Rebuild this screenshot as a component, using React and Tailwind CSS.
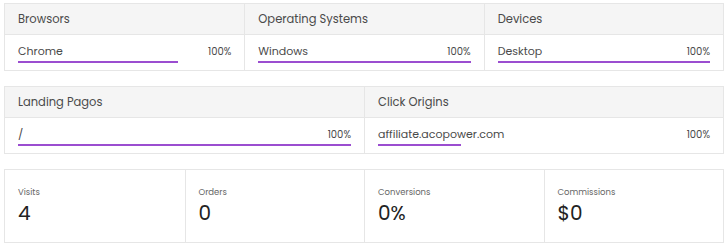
const font = { fontFamily: 'Poppins, Inter, "Open Sans", sans-serif' }

function Cell({ title, name, pct, bar, first }) {
  return (
    <div className={`flex flex-col ${first ? '' : 'border-l border-[#e6e6e6]'}`}>
      <div className="h-[31px] bg-[#f5f5f5] border-b border-[#e6e6e6] px-[13px] pt-[1px] flex items-center text-[11.5px] text-[#4a4a4a]">
        {title}
      </div>
      <div className="h-[35px] px-[13px] pt-[9px]">
        <div className="flex justify-between items-center text-[11px] leading-[15px] text-[#4a4a4a]">
          <span>{name}</span>
          <span className="text-[10px]">{pct}</span>
        </div>
        <div className="mt-[2px] h-[2px] bg-[#9b4dd0]" style={{ width: bar }} />
      </div>
    </div>
  )
}

function Stat({ label, value, first }) {
  return (
    <div className={`h-full px-[13px] pt-[15px] ${first ? '' : 'border-l border-[#e6e6e6]'}`}>
      <div className="text-[8.5px] leading-[14px] text-[#666]">{label}</div>
      <div className="mt-[1px] text-[20px] leading-[26px] text-[#222]">{value}</div>
    </div>
  )
}

export default function App() {
  return (
    <div className="w-[728px] h-[247px] bg-white px-[4px] pt-[3px] flex flex-col gap-[15px]" style={font}>
      <div className="grid grid-cols-3 border border-[#e6e6e6]">
        <Cell first title="Browsors" name="Chrome" pct="100%" bar="160px" />
        <Cell title="Operating Systems" name="Windows" pct="100%" bar="100%" />
        <Cell title="Devices" name="Desktop" pct="100%" bar="100%" />
      </div>
      <div className="grid grid-cols-2 border border-[#e6e6e6]">
        <Cell first title="Landing Pagos" name="/" pct="100%" bar="100%" />
        <Cell title="Click Origins" name="affiliate.acopower.com" pct="100%" bar="83px" />
      </div>
      <div className="grid grid-cols-4 h-[74px] border border-[#e6e6e6]">
        <Stat first label="Visits" value="4" />
        <Stat label="Orders" value="0" />
        <Stat label="Conversions" value="0%" />
        <Stat label="Commissions" value="$0" />
      </div>
    </div>
  )
}
